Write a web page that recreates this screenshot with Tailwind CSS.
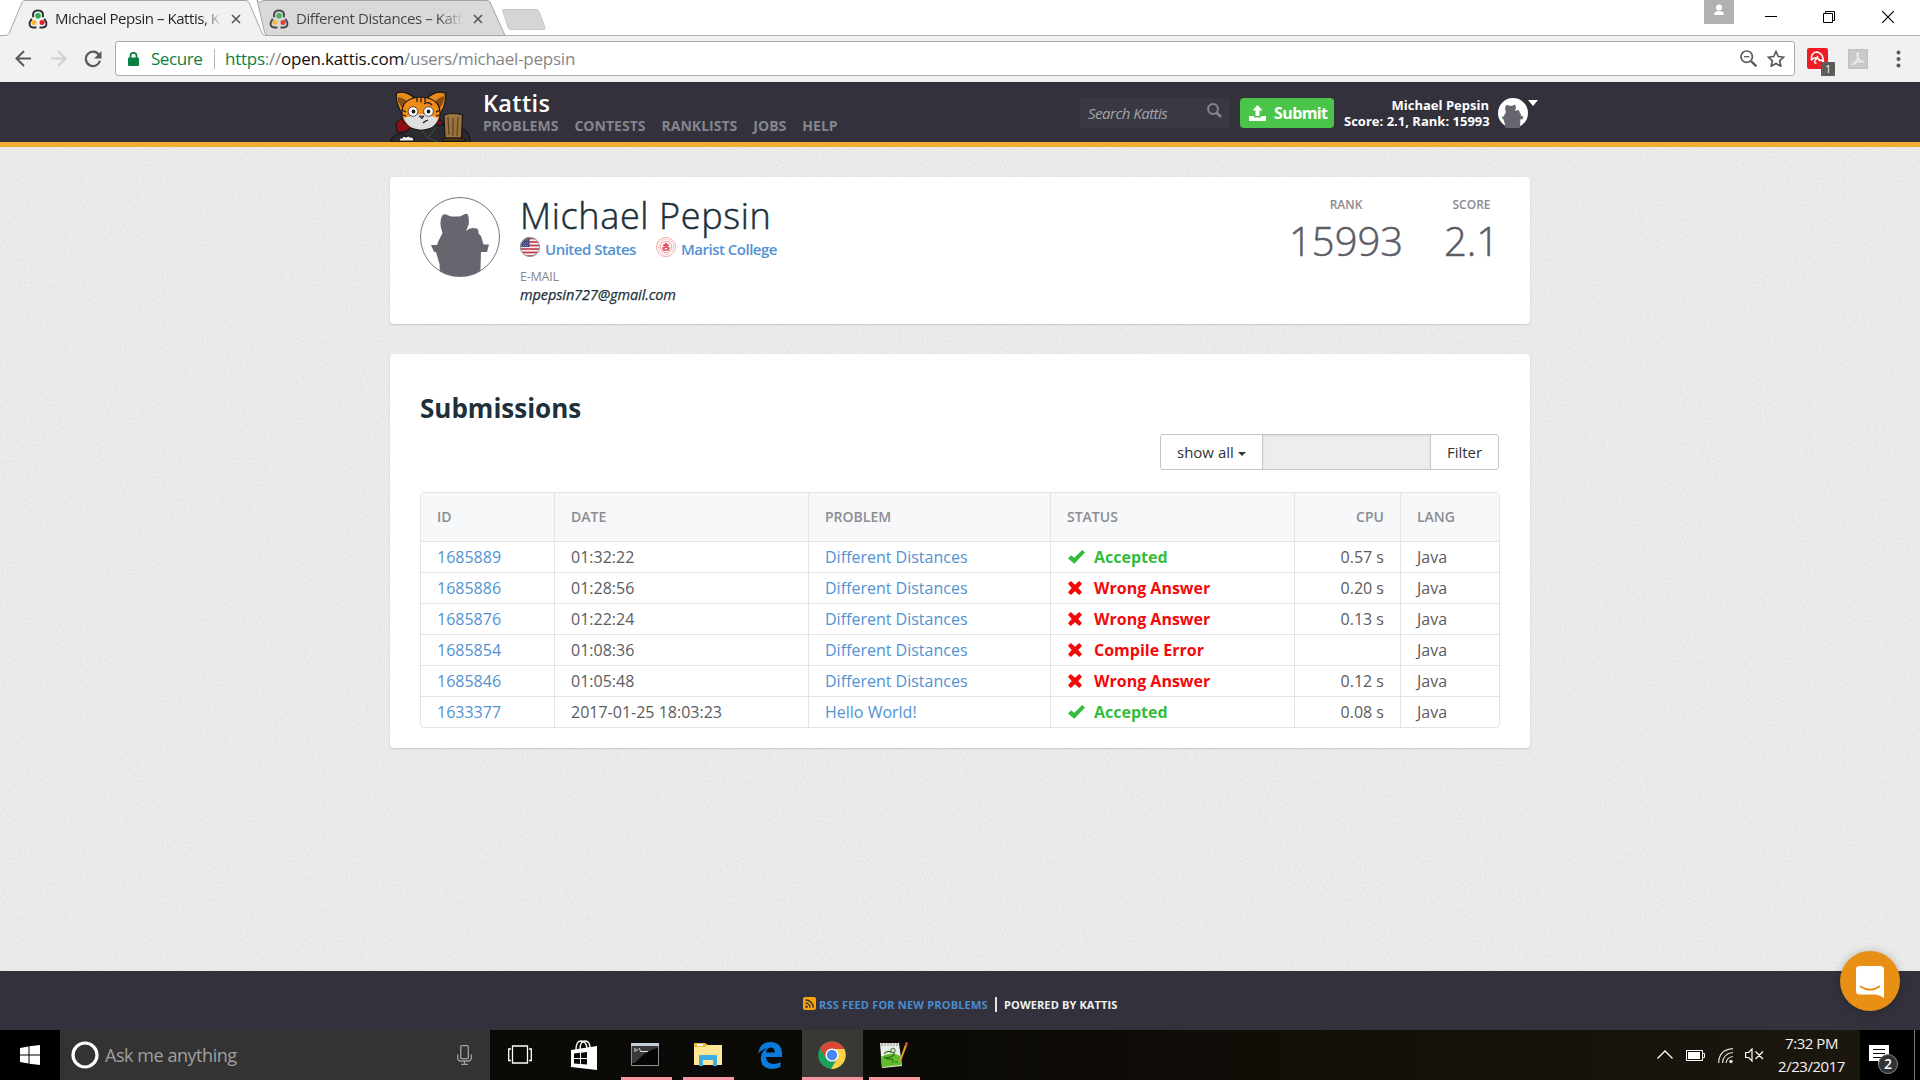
<!DOCTYPE html>
<html lang="en">
<head>
<meta charset="utf-8">
<title>Michael Pepsin – Kattis, Kattis</title>
<script src="https://cdn.jsdelivr.net/npm/@tailwindcss/browser@4"></script>
</head>
<body class="w-[1920px] h-[1080px] overflow-hidden flex flex-col font-['Open_Sans',sans-serif] bg-white">

<svg class="hidden">
  <defs>
    <symbol id="fav" viewBox="0 0 20 20">
      <path d="M5.200 8.200Q4 1.500 10 1.500t4.800 6.700M16.300 9.800l1.900 3.500q1.300 4.500-3.200 5.200h-3.500M3.700 9.800l-1.900 3.500Q.5 17.800 5 18.500h3.500" fill="none" stroke="#2d3038" stroke-width="2"/>
      <circle cx="10" cy="6.700" r="2.800" fill="#31ab4c"/><circle cx="6" cy="13.600" r="2.500" fill="#f5b62e"/><circle cx="14" cy="13.600" r="2.500" fill="#e2202c"/>
    </symbol>
    <symbol id="sil" viewBox="0 0 80 80">
      <path d="M22 19Q23 16.500 26 17.500L31 19.500H40L44 17.500Q47.500 16 48 18 49.500 23 48.500 28L46 34Q49 31 53 31L57 31.500Q59 33 58.500 36.500L61 39 63.500 47.500H69L67 55H61L60.500 72 60 77Q40 84 20 77L19.500 67 16 55H14L11 48H17L18.500 44 22.500 36 21 31Q19.500 24 22 19z" fill="#66666f"/>
    </symbol>
    <symbol id="ok" viewBox="0 0 17 14"><path d="M0 8.500L3 5.200l3.300 2.600L14.200 0 17 2.600 6.300 13.800z" fill="#35bc3c"/></symbol>
    <symbol id="no" viewBox="0 0 14 14"><path d="M0 2.800L2.800 0 7 3.700 11.200 0 14 2.800 10.300 7 14 11.200 11.200 14 7 10.300 2.800 14 0 11.200 3.700 7z" fill="#f20a0a"/></symbol>
  </defs>
</svg>

<!-- Browser tabs -->
<div class="relative h-[35px] shrink-0 flex">
  <svg class="absolute inset-0" width="1920" height="36" viewBox="0 0 1920 36">
    <path d="M0 35.500H1920" stroke="#b0b0b0"/>
    <path d="M257 0L264.500 32q1 3.500 4 3.500H505L490 2q-1-1.500-3-1.500H264q-3 0-4 2z" fill="#d9d9d9" stroke="#a5a5a5"/>
    <path d="M0 35.500H5q3 0 4-2L22 2.500q1-2 3-2H246q2 0 3 2L262 33q1 2.500 4 2.500v1H0z" fill="#f1f1f1"/>
    <path d="M0 35.500H5q3 0 4-2L22 2.500q1-2 3-2H246q2 0 3 2L262 33q1 2.500 4 2.500" fill="none" stroke="#a8a8a8"/>
    <path d="M503 9.500h33q2 0 3 2l6 16q1 2-2 2h-32q-2 0-3-2l-5-16q-1-2 0-2z" fill="#d5d5d5" stroke="#c8c8c8"/>
  </svg>
  <div class="relative flex items-center h-[38px] pl-7 w-[269px]">
    <svg class="w-5 h-5"><use href="#fav"/></svg>
    <span class="ml-[7px] -mt-[2px] w-[168px] whitespace-nowrap text-[15px] tracking-[-0.45px] text-transparent bg-clip-text bg-linear-to-r from-[#222] from-88% to-[#f1f1f1] to-99%">Michael Pepsin – Kattis, K</span>
    <svg class="ml-2" width="10" height="10"><path d="M1 1l8 8M9 1l-8 8" stroke="#555" stroke-width="1.600"/></svg>
  </div>
  <div class="relative flex items-center h-[38px] w-[240px]">
    <svg class="w-5 h-5 opacity-85"><use href="#fav"/></svg>
    <span class="ml-[7px] -mt-[2px] w-[167px] whitespace-nowrap text-[15px] tracking-[-0.42px] text-transparent bg-clip-text bg-linear-to-r from-[#444] from-85% to-[#d9d9d9]">Different Distances – Katt</span>
    <svg class="ml-[10px]" width="10" height="10"><path d="M1 1l8 8M9 1l-8 8" stroke="#555" stroke-width="1.600"/></svg>
  </div>
  <div class="relative ml-auto flex items-start pr-[26px]">
    <svg width="30" height="24"><path d="M0 0h30v24H0z" fill="#b1b1b1"/><circle cx="15" cy="7.500" r="3" fill="#fff"/><path d="M10 15q0-4 5-4t5 4z" fill="#fff"/></svg>
    <svg class="ml-[31px] mt-4" width="12" height="1"><path d="M0 .5h12" stroke="#000"/></svg>
    <svg class="ml-[46px] mt-[11px]" width="12" height="12"><path d="M.5 2.500h9v9h-9zM2.500 2.500v-2h9v9h-2" fill="none" stroke="#000"/></svg>
    <svg class="ml-[47px] mt-[11px]" width="12" height="12"><path d="M0 0l12 12M12 0L0 12" stroke="#000" stroke-width="1.200"/></svg>
  </div>
</div>

<!-- Address bar -->
<div class="relative h-[47px] shrink-0 bg-[#f1f1f1] border-b border-[#a9a9a9] flex items-center pb-px pl-[15px] pr-[19px] mt-px -mb-px">
  <svg width="17" height="17" viewBox="0 0 17 17" fill="none" stroke="#5a5a5a" stroke-width="2"><path d="M16 8.500H2M9 1L1.500 8.500 9 16"/></svg>
  <svg class="ml-[18px]" width="17" height="17" viewBox="0 0 17 17" fill="none" stroke="#d0d0d0" stroke-width="2"><path d="M1 8.500H15M8 1l7.500 7.500L8 16"/></svg>
  <svg class="ml-[17px]" width="18" height="18" viewBox="0 0 18 18"><path d="M14.800 4.500A7.200 7.200 0 1 0 16 10.800" fill="none" stroke="#5a5a5a" stroke-width="2.200"/><path d="M17.500 1v7.500H10z" fill="#5a5a5a"/></svg>
  <div class="ml-[13px] w-[1680px] h-[35px] bg-white border border-[#ababab] rounded-[3px] flex items-center pl-3 pr-[9px] text-[17px] whitespace-nowrap">
    <svg width="11" height="14" viewBox="0 0 11 14"><path d="M2.500 6V3.800a3 3 0 0 1 6 0V6" fill="none" stroke="#0b8043" stroke-width="1.700"/><rect y="5.500" width="11" height="8.500" rx="1" fill="#0b8043"/></svg>
    <span class="ml-3 w-[52px] text-[#0b8043] tracking-[-0.45px]">Secure</span>
    <span class="ml-[11px] w-px h-[20px] bg-[#b5b5b5]"></span>
    <span class="ml-[10px] text-[#868686] tracking-[-0.24px]"><span class="text-[#0b8043]">https</span>://<span class="text-[#111]">open.kattis.com</span>/users/michael-pepsin</span>
    <svg class="ml-auto" width="17" height="17" viewBox="0 0 17 17" fill="none" stroke="#5a5a5a"><circle cx="6.700" cy="6.700" r="5.700" stroke-width="1.700"/><path d="M11 11l5.300 5.300" stroke-width="2.400"/><path d="M4 6.700h5.400" stroke-width="1.300"/></svg>
    <svg class="ml-[10px]" width="18" height="17" viewBox="0 0 18 17"><path d="M9 1.500l2.300 5 5.400.6-4 3.700 1.100 5.300L9 13.400l-4.800 2.700 1.100-5.300-4-3.700 5.400-.6z" fill="none" stroke="#5a5a5a" stroke-width="1.700"/></svg>
  </div>
  <div class="relative ml-3">
    <svg width="21" height="21" viewBox="0 0 21 21"><rect width="21" height="21" rx="2" fill="#ee1c23"/><path d="M4.500 12.500Q3.500 4.500 10 4 16.500 5.500 16.500 14M4.500 12.500q1-3 4-2.500M8.500 10q3-.5 4 2.500l2-.5 2 2.500M11 8l-3.500 5.500q0 2 2 1.500" fill="none" stroke="#fff" stroke-width="1.500"/></svg>
    <span class="absolute left-[14px] top-[14px] w-[14px] h-[14px] bg-[#5c5c5c] text-white text-[10px] leading-[14px] text-center rounded-[1px]">1</span>
  </div>
  <svg class="ml-5" width="20" height="20" viewBox="0 0 20 20"><path d="M0 0h20v20H0z" fill="#c2c2c2"/><path d="M1.500 1.500h17v17h-17z" fill="#cacaca"/><path d="M4 16q7-4 6-12-1-1-1 2 2 7 7 7-5-2-12 3z" fill="none" stroke="#f2f2f2" stroke-width="1.200"/></svg>
  <svg class="ml-auto" width="5" height="18" fill="#5a5a5a"><circle cx="2.500" cy="2.500" r="2"/><circle cx="2.500" cy="9" r="2"/><circle cx="2.500" cy="15.500" r="2"/></svg>
</div>

<!-- Kattis header -->
<header class="relative h-[65px] shrink-0 bg-[#33323c] border-b-[5px] border-[#f1af32] px-[390px] flex shadow-[0_1px_3px_rgba(0,0,0,0.15)]">
  <svg class="mt-[8px] shrink-0" width="81" height="52" viewBox="0 0 81 52">
    <g stroke="#17151a" stroke-width="1.200">
      <path d="M7 42l-1-7q2-6 8-7l36 1q4 5 3 13z" fill="#8d0d10"/>
      <path d="M.5 52q2-8 13-9l12-8h33q20 0 22 17z" fill="#2b2b2d"/>
      <path d="M30 38l8 10 8-11M38 48l10 4" fill="none" stroke="#444"/>
      <path d="M12 24Q5 12 6.500 3q9-3 18 5z" fill="#e88a18"/>
      <path d="M50 24q7-10 5-21-9-3-18 5z" fill="#e88a18"/>
      <path d="M13 19Q7 12 8 7q7 1 10 6z" fill="#8b4d14" stroke="none"/>
      <path d="M49 19q6-7 5-13-7 2-10 7z" fill="#8b4d14" stroke="none"/>
      <path d="M12 22Q12 8 31 7q18 1 19 15 1 9-5 12-6 6-14 6t-14-6q-6-3-5-12z" fill="#ef8b17"/>
      <path d="M14 28q5-2 9-2l6-2h4l6 2q5 0 9 2-2 11-17 11.500Q17 39 14 28z" fill="#dedede" stroke="none"/>
      <circle cx="23" cy="21.500" r="4.800" fill="#fff" stroke-width=".7"/><circle cx="38.500" cy="21.500" r="4.800" fill="#fff" stroke-width=".7"/>
      <circle cx="23.500" cy="21.500" r="1.300" fill="#111"/><circle cx="38.500" cy="21.500" r="1.300" fill="#111"/>
      <path d="M27 8v4M31 7.500v5M35 8v4M12 20l4 2M12 25l4 1M50 20l-4 2M50 25l-4 1M34 14q4-3 8 1M33 33q2-2 5-3" fill="none"/>
      <path d="M29 26h5l-2 3z" fill="#6b5c55" stroke-width=".7"/>
      <path d="M54 25q9-3 18.500 0l-1 23H55z" fill="#9a7440"/>
      <path d="M58 27l1 18M63 28v18M68 27l-1 19" fill="none" stroke="#5b4020"/>
      <path d="M52 51v-2q10-2 23 0v2z" fill="#5c3a17"/>
      <path d="M9 51q0-4 3-3 1-3 4-1 3-2 4 0 4-1 4 4z" fill="#eee"/>
    </g>
  </svg>
  <div class="ml-3 pt-[9px]">
    <div class="text-[23.500px] leading-6 h-[25px] font-semibold text-white tracking-[0.35px]">Kattis</div>
    <nav class="flex gap-4 text-[14px] leading-5 font-bold text-[#85858d] tracking-[0.02px]">
      <span>PROBLEMS</span><span>CONTESTS</span><span>RANKLISTS</span><span>JOBS</span><span>HELP</span>
    </nav>
  </div>
  <div class="ml-auto mt-4 flex h-[30px] -mr-2">
    <div class="w-[150px] h-[30px] rounded bg-[#3a3943] flex items-center pl-2 pr-2 text-[15px] italic text-[#a3a3a9]">
      <span class="tracking-[-0.5px]">Search Kattis</span>
      <svg class="ml-auto -mt-[5px]" width="15" height="15" viewBox="0 0 15 15" fill="none" stroke="#85858d"><circle cx="6" cy="6" r="4.900" stroke-width="2"/><path d="M9.500 9.500l4.500 4.500" stroke-width="2.500"/></svg>
    </div>
    <div class="ml-[10px] w-[94px] h-[30px] rounded bg-[#4ac549] flex items-center pl-[9px] text-[16px] text-white">
      <svg width="17" height="17" viewBox="0 0 17 17" fill="#fff"><path d="M8.500 0l5 5.500h-3V11h-4V5.500h-3z"/><path d="M0 11h5v1.500h7V11h5v5H0z"/></svg>
      <span class="ml-2 tracking-[-0.6px] font-bold">Submit</span>
    </div>
    <div class="ml-[10px] w-[145px] text-right text-[13px] leading-4 font-bold text-white whitespace-nowrap -mt-px tracking-[0.01px]">Michael Pepsin<br>Score: 2.1, Rank: 15993</div>
    <svg class="ml-[9px]" width="30" height="30" viewBox="0 0 30 30"><circle cx="15" cy="15" r="15" fill="#fff"/><svg x="-.5" y=".5" width="30" height="30"><use href="#sil"/></svg></svg>
    <svg class="mt-[2px]" width="10" height="6"><path d="M0 0h10L5 6z" fill="#fff"/></svg>
  </div>
</header>

<!-- Page body -->
<main class="h-[824px] shrink-0 relative bg-[#ededed] px-[390px] pt-[30px]">
  <svg class="absolute inset-0 opacity-10" width="1920" height="824"><filter id="grain"><feTurbulence type="fractalNoise" baseFrequency="0.45" numOctaves="2"/><feColorMatrix values="1 0 0 0 0.150  1 0 0 0 0.150  1 0 0 0 0.150  0 0 0 0 1"/></filter><rect width="1920" height="824" filter="url(#grain)"/></svg>
  <section class="relative h-[147px] rounded bg-white shadow-[0_1px_2px_rgba(0,0,0,0.15)] flex px-[30px] pt-5">
    <svg width="80" height="80"><defs><clipPath id="disc"><circle cx="40" cy="40" r="40"/></clipPath></defs><g clip-path="url(#disc)"><use href="#sil"/></g><circle cx="40" cy="40" r="39.500" fill="none" stroke="#77777f"/></svg>
    <div class="ml-5">
      <h1 class="text-[36px] leading-[38px] h-10 font-light text-[#20303a] whitespace-nowrap tracking-[0.65px] [-webkit-text-stroke:0.5px_#20303a]">Michael Pepsin</h1>
      <div class="flex text-[15px] leading-5 font-semibold text-[#5292d2] whitespace-nowrap">
        <svg width="20" height="20"><defs><clipPath id="fl"><circle cx="10" cy="10" r="10"/></clipPath></defs><g clip-path="url(#fl)"><path d="M0 0h20v20H0z" fill="#f0e8ea"/><path d="M0 1.500h20M0 5h20M0 8.500h20M0 12h20M0 15.500h20M0 19h20" stroke="#bf2f45" stroke-width="1.700"/><path d="M0 0h9.500v10H0z" fill="#454b7c"/><path d="M1 3h8M1 6h8M1 8.500h8" stroke="#9a9dbb" stroke-width=".8" stroke-dasharray="1 1"/></g><circle cx="10" cy="10" r="9.500" fill="none" stroke="#99979d"/></svg>
        <span class="ml-[5px] w-[90px] pt-[2px] tracking-[-0.5px]">United States</span>
        <svg class="ml-[21px]" width="20" height="20" fill="none" stroke="#f0a6ab"><circle cx="10" cy="10" r="9.500"/><circle cx="10" cy="10" r="7.500" stroke-dasharray="1.500 1"/><circle cx="10" cy="10" r="5.700"/><path d="M6.500 13h7M7.500 12q1-2 2.500-2t2.500 2M7 8.500h6M8 8l2-1.500 2 1.500M7 10v2M13 10v2" stroke="#df4f5b" stroke-width="1.300"/></svg>
        <span class="ml-[5px] pt-[2px] tracking-[-0.5px]">Marist College</span>
      </div>
      <div class="mt-2 text-[12.500px] leading-5 text-[#85858d] font-medium tracking-[-0.2px]">E-MAIL</div>
      <div class="-mt-[2px] text-[14.500px] leading-5 italic text-[#20303a] tracking-[-0.1px] [-webkit-text-stroke:0.25px_#20303a]">mpepsin727@gmail.com</div>
    </div>
    <div class="ml-auto flex gap-10 text-center">
      <div class="w-[114px]"><div class="text-[12px] leading-4 font-semibold text-[#8a8a92]">RANK</div><div class="text-[40px] leading-[56px] font-light text-[#5b5b64] [-webkit-text-stroke:0.5px_#5b5b64]">15993</div></div>
      <div class="w-[57px]"><div class="text-[12px] leading-4 font-semibold text-[#8a8a92]">SCORE</div><div class="text-[40px] leading-[56px] font-light text-[#5b5b64] [-webkit-text-stroke:0.5px_#5b5b64]">2.1</div></div>
    </div>
  </section>

  <section class="relative mt-[30px] h-[394px] rounded bg-white shadow-[0_1px_2px_rgba(0,0,0,0.15)] px-[30px] pt-9">
    <h2 class="text-[26px] leading-9 font-bold text-[#20303a]">Submissions</h2>
    <div class="mt-2 h-9 w-[339px] ml-[740px] flex border border-[#c5c6c9] rounded-[3px] text-[15px] text-[#333] overflow-hidden">
      <div class="w-[102px] flex items-center pl-4 border-r border-[#c5c6c9]"><span>show all</span><svg class="ml-1 mt-1" width="8" height="4"><path d="M0 0h8L4 4z" fill="#333"/></svg></div>
      <div class="w-[168px] bg-[#ededed] border-r border-[#c5c6c9] shadow-[inset_0_1px_2px_rgba(0,0,0,0.08)]"></div>
      <div class="grow flex items-center justify-center">Filter</div>
    </div>
    <div id="table" class="mt-[22px] w-[1080px] h-[236px] border border-[#e3e4e6] rounded overflow-hidden text-[16px] text-[#5b5b60]">
      <div class="grid grid-cols-[134px_254px_242px_244px_106px_98px] h-[49px] bg-[#f7f8fa] border-b border-[#e3e4e6] text-[14px] font-semibold text-[#8c8c94] divide-x divide-[#e3e4e6] [&>div]:flex [&>div]:items-center [&>div]:px-4 [&>div]:pb-[2px]">
        <div>ID</div><div>DATE</div><div>PROBLEM</div><div>STATUS</div><div class="justify-end">CPU</div><div>LANG</div>
      </div>
    </div>
  </section>
</main>

<template id="row">
  <div class="grid grid-cols-[134px_254px_242px_244px_106px_98px] h-[31px] border-b border-[#e3e4e6] divide-x divide-[#e3e4e6] [&>div]:flex [&>div]:items-center [&>div]:px-4">
    <div class="text-[#5292d2]"></div><div></div><div class="text-[#5292d2]"></div><div class="font-bold"></div><div class="justify-end"></div><div>Java</div>
  </div>
</template>
<script>
const rows = [
  ['1685889','01:32:22','Different Distances','Accepted','0.57 s'],
  ['1685886','01:28:56','Different Distances','Wrong Answer','0.20 s'],
  ['1685876','01:22:24','Different Distances','Wrong Answer','0.13 s'],
  ['1685854','01:08:36','Different Distances','Compile Error',''],
  ['1685846','01:05:48','Different Distances','Wrong Answer','0.12 s'],
  ['1633377','2017-01-25 18:03:23','Hello World!','Accepted','0.08 s']
];
for (const r of rows) {
  const n = document.getElementById('row').content.cloneNode(true);
  const c = n.firstElementChild.children;
  r.forEach((t, i) => {
    if (i !== 3) { c[i].textContent = t; return; }
    c[i].innerHTML = t === 'Accepted'
      ? '<svg class="w-[17px] h-[14px] ml-px mr-[9px]"><use href="#ok"/></svg><span class="text-[#35bc3c]">' + t + '</span>'
      : '<svg class="w-[14px] h-[14px] ml-px mr-3"><use href="#no"/></svg><span class="text-[#f20a0a]">' + t + '</span>';
  });
  document.getElementById('table').appendChild(n);
}
</script>

<!-- Footer -->
<footer class="h-[59px] shrink-0 bg-[#33323c] flex items-start pl-[803px] pt-[25px] text-[11px] leading-4 font-bold">
  <svg class="mt-px" width="13" height="13" viewBox="0 0 13 13"><rect width="13" height="13" rx="2" fill="#fca40d"/><circle cx="3.500" cy="9.700" r="1.200" fill="#333"/><path d="M2.500 6a4.500 4.500 0 0 1 4.500 4.700M2.500 3a7.500 7.500 0 0 1 7.700 7.700" fill="none" stroke="#333" stroke-width="1.400"/></svg>
  <span class="ml-[3px] w-[169px] mt-px text-[#4a8ccf] tracking-[0.18px] whitespace-nowrap">RSS FEED FOR NEW PROBLEMS</span>
  <span class="ml-[7px] mt-px w-[2px] h-[15px] bg-[#e4e4e4]"></span>
  <span class="ml-[7px] mt-px text-[#f1f1f1] tracking-[0.13px]">POWERED BY KATTIS</span>
</footer>

<!-- Taskbar -->
<div class="relative h-[50px] shrink-0 bg-linear-to-r from-[#0b0906] via-[#0c0a06] to-[#1d180f] flex">
  <div class="w-[60px] bg-black flex items-center justify-center"><svg width="20" height="20" fill="#fff"><path d="M0 3l8.500-1.500v8H0zM9.500 1.300L20 0v9.500H9.500zM0 10.500h8.500v8L0 17zM9.500 10.500H20V20L9.500 18.700z"/></svg></div>
  <div class="w-[430px] bg-[#333] flex items-center pl-[11px] pr-[18px]">
    <svg width="28" height="28"><circle cx="14" cy="14" r="12" fill="none" stroke="#fff" stroke-width="3.200"/></svg>
    <span class="ml-[6px] text-[18px] text-[#a0a0a0] tracking-[-0.45px] whitespace-nowrap">Ask me anything</span>
    <svg class="ml-auto" width="15" height="20" fill="none" stroke="#a0a0a0" stroke-width="1.300"><rect x="3.700" y=".7" width="7.600" height="13" rx="1"/><path d="M.7 9.500v3q0 3.500 3 3.500h7.600q3 0 3-3.500v-3M7.500 16v3M4 19.300h7"/></svg>
  </div>
  <svg class="ml-[18px] mt-[15px]" width="24" height="20" fill="none" stroke="#fff" stroke-width="1.300"><path d="M4.500 1h15v17h-15zM3 4H.7v11.500H3M21 4h2.300v11.500H21"/></svg>
  <svg class="ml-[39px] mt-[10px]" width="26" height="30" fill="#fff"><path d="M0 10l26-4v24L0 27z"/><path d="M5 10Q5 1 10 1t6 7M9 10q0-9 5-9t5 7" fill="none" stroke="#fff" stroke-width="1.300"/><path d="M3 13.500l6-.7v5.200H3zM10 12.700l6-.7v6h-6zM3 19h6v5l-6-.4zM10 19h6v5.500l-6-.6z" fill="#0b0906"/></svg>
  <div class="ml-6 w-[51px] flex flex-col items-center border-b-[3px] border-[#fb93a0] pt-[13px]"><svg class="-ml-[3px]" width="28" height="23"><path d="M.5.500h27v22H.5z" fill="#050505" stroke="#8d9499"/><path d="M0 0h28v3H0z" fill="#c3cdd6"/><path d="M1 12V3h26v2Q15 7 4 20H1z" fill="#3a3a3a"/><path d="M3 6h2M3 8h2M6 6v2M8 5l2 4M10 8.500h7" stroke="#ddd" fill="none"/></svg></div>
  <div class="ml-[11px] w-[51px] flex flex-col items-center border-b-[3px] border-[#fb93a0] pt-[13px]"><svg class="-ml-[2px]" width="28" height="24"><path d="M0 0h11l3 2h13q1 0 1 1v19H0z" fill="#e8b93c"/><path d="M0 4h11l3-2h14v20H0z" fill="#ffe595"/><path d="M3 1h6v2H3z" fill="#fff"/><path d="M5 23V13q0-1 1-1h16q1 0 1 1v10h-4v-6H9v6z" fill="#3daee2"/></svg></div>
  <svg class="ml-6 mt-3" width="24" height="27" viewBox="0 0 24 27"><path d="M0 11.500Q2 0 12.500 0 24 .5 24 12v3H8q.5 6.500 7.500 7 4 0 7-2v5q-4 2-8.500 2Q3 26.500 2.800 17q0-7.500 6-10.500Q4 7 0 11.500zM8.200 10.500h8.600q0-5-4.300-5-3.800.3-4.300 5z" fill="#0a7bdc"/></svg>
  <div class="ml-5 w-[61px] flex justify-center bg-[#3a3834] border-b-[3px] border-[#fb93a0] pt-[11px]"><svg class="-ml-[2px]" width="28" height="28" viewBox="0 0 28 28"><circle cx="14" cy="14" r="13.800" fill="#1f9f5c"/><path d="M2 7A14 14 0 0 1 26.300 8H14l-6.500 8z" fill="#dc4639"/><path d="M26.300 8A14 14 0 0 1 13 28l6.500-11L19 10l-4-2z" fill="#fcd04b"/><circle cx="14" cy="14" r="6.600" fill="#fff"/><circle cx="14" cy="14" r="5.200" fill="#4688f1"/></svg></div>
  <div class="ml-[6px] w-[51px] flex justify-center border-b-[3px] border-[#fb93a0] pt-3"><svg class="-ml-[2px]" width="28" height="27"><path d="M0 1h19l3 23-20 2z" fill="#e8eee8"/><path d="M.8 15q10-6 19.500-1l1.200 9-19.500 2z" fill="#62bd2c"/><path d="M2 1v3M5 1v3M8 1v3M11 1v3M14 1v3M17 1v3" stroke="#888"/><path d="M4 12q3-4 7-2 4 0 3 3-5 4-10 2M5 16q5 2 8 1M13 18v3M15 20h3" fill="none" stroke="#2b6d20" stroke-width="1.200"/><circle cx="13" cy="8.500" r="2.300" fill="#c9e8b0" stroke="#333" stroke-width=".7"/><path d="M28 1l-7 18-1.500 2V18L26 0z" fill="#e2a324"/><path d="M26 0l2 1-1 3-2-1z" fill="#c43b33"/></svg></div>

  <div class="ml-auto flex items-start text-white">
    <svg class="mt-[20px]" width="16" height="9"><path d="M.5 8.500L8 1l7.500 7.500" fill="none" stroke="#fff" stroke-width="1.300"/></svg>
    <svg class="ml-[13px] mt-[20px]" width="20" height="11"><path d="M.5.500h16v10H.5zM17 3.500h1.500v4H17" fill="none" stroke="#fff"/><path d="M2 2h12v7H2z" fill="#fff"/></svg>
    <svg class="ml-3 mt-[18px]" width="16" height="16" fill="none" stroke="#ddd" stroke-width="1.200"><path d="M.7 15Q1 1.500 15 .7M4.500 15Q5 5.500 15 4.500M8 15q1-6 7-6.500"/><circle cx="13" cy="13.500" r="1.200" fill="#fff"/></svg>
    <svg class="ml-[11px] mt-[18px]" width="19" height="15" fill="none" stroke="#fff" stroke-width="1.200"><path d="M.6 4.500h3L7 1v12L3.600 9.500h-3zM10.500 3.500l7.500 7.500M18 3.500L10.500 11"/></svg>
    <div class="ml-[13px] w-[69px] pt-[2px] text-center text-[15px] leading-[23px] tracking-[-0.45px] whitespace-nowrap text-[#f4f4f4]">7:32 PM<br>2/23/2017</div>
    <div class="ml-[14px] relative w-[54px] h-[50px] bg-black">
      <svg class="absolute left-[9px] top-[15px]" width="20" height="20"><path d="M0 0h20v16h-8l-3 4v-4H0z" fill="#fff"/><path d="M4 4.500h12M4 8.500h12M4 12.500h8" stroke="#000"/></svg>
      <span class="absolute left-[18px] top-6 w-5 h-5 rounded-full bg-[#333] border border-[#888] text-[14px] leading-[18px] font-semibold text-center">2</span>
    </div>
    <div class="w-[6px] h-[50px] border-l border-[#777] bg-black"></div>
  </div>

  <!-- Floating chat launcher -->
  <div class="absolute left-[1840px] -top-[79px] w-[60px] h-[60px] rounded-full bg-[#e89016] shadow-[0_1px_10px_rgba(0,0,0,0.25)]">
    <svg class="absolute left-4 top-[15px]" width="28" height="33"><path d="M3.500 0h21Q28 0 28 3.500V32q-5-3.500-9-3.500H3.500Q0 28.500 0 25V3.500Q0 0 3.500 0z" fill="#fff"/><path d="M4.500 20.500q9.500 6.500 19 0" fill="none" stroke="#e89016" stroke-width="1.900" stroke-linecap="round"/></svg>
  </div>
</div>
</body>
</html>
